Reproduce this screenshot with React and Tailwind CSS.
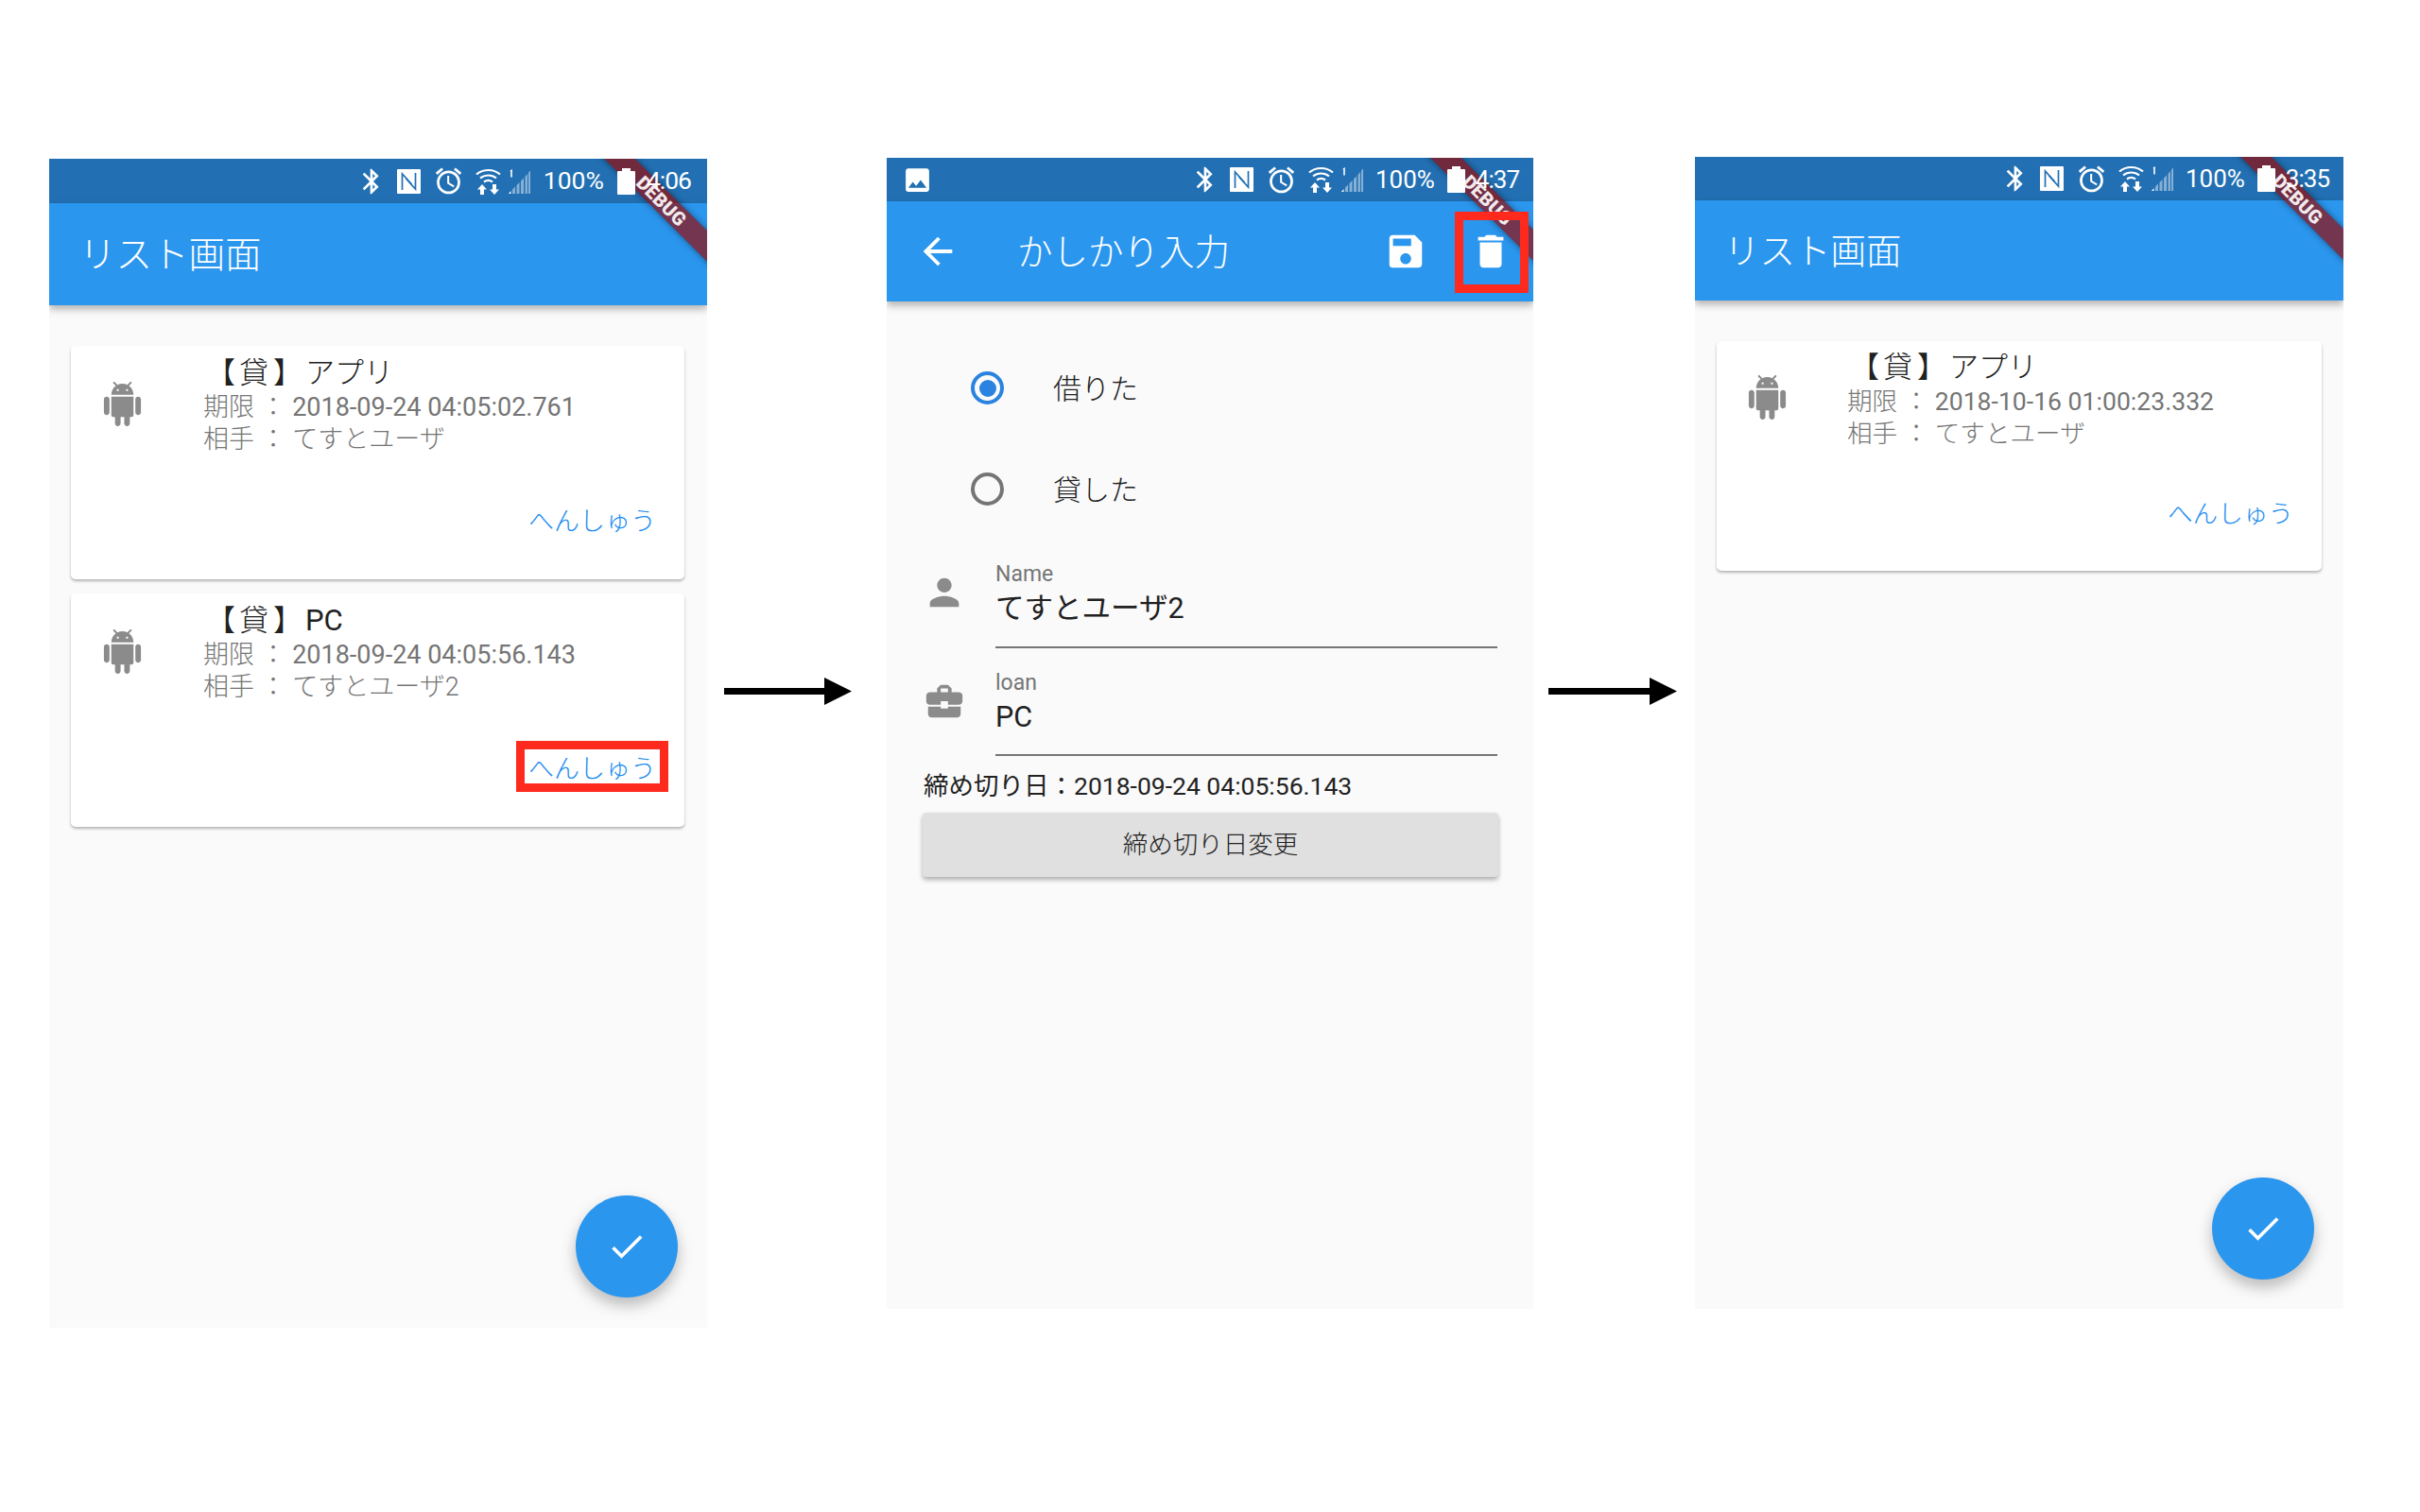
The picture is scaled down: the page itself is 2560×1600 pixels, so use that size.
import React from "react";
import { MdArrowBack, MdBluetooth, MdBusinessCenter, MdCheck, MdDelete, MdImage, MdOutlineAlarm, MdPerson, MdSave } from "react-icons/md";

function Android() {
  return (
    <svg width="47" height="47" viewBox="0 0 24 24" fill="#8b8b8b">
      <path d="M6 18c0 .55.45 1 1 1h1v3.500c0 .83.67 1.500 1.500 1.500s1.500-.67 1.500-1.500V19h2v3.500c0 .83.67 1.500 1.500 1.500s1.500-.67 1.500-1.500V19h1c.55 0 1-.45 1-1V8H6v10zM3.500 8C2.670 8 2 8.670 2 9.500v7c0 .83.67 1.500 1.500 1.500S5 17.330 5 16.500v-7C5 8.670 4.330 8 3.500 8zm17 0c-.83 0-1.500.67-1.500 1.500v7c0 .83.67 1.500 1.500 1.500s1.500-.67 1.500-1.500v-7c0-.83-.67-1.500-1.500-1.500zm-4.970-5.840l1.300-1.300c.2-.2.2-.51 0-.71-.2-.2-.51-.2-.71 0l-1.480 1.480C13.850 1.230 12.950 1 12 1c-.96 0-1.860.23-2.660.63L7.850.15c-.2-.2-.51-.2-.71 0-.2.2-.2.51 0 .71l1.310 1.310C6.970 3.260 6 5.010 6 7h12c0-1.990-.97-3.750-2.470-4.840zM10 5H9V4h1v1zm5 0h-1V4h1v1z" />
    </svg>
  );
}

function Nfc() {
  return (
    <svg width="25" height="26" viewBox="0 0 25 26">
      <rect width="25" height="26" rx="1" fill="#fff" />
      <path d="M5.500 22V5l10 11" fill="none" stroke="#2270b3" strokeWidth="1.700" />
      <path d="M19.500 4v17l-10-11" fill="none" stroke="#2270b3" strokeWidth="1.700" />
    </svg>
  );
}

function WifiArrows() {
  return (
    <svg width="27" height="28" viewBox="0 0 27 28" fill="none">
      <path d="M1 6.500C8 .5 19 .5 26 6.500" stroke="#fff" strokeWidth="2.200" />
      <path d="M5 10.500c5-4 12-4 17 0" stroke="#fff" strokeWidth="2.200" />
      <path d="M9 14.500c3-2.200 6-2.200 9 0" stroke="#fff" strokeWidth="2.200" />
      <path d="M7 17l-5 5.500h3V28h4v-5.500h3z" fill="#fff" />
      <path d="M20 28l5-5.500h-3V17h-4v5.500h-3z" fill="#fff" />
    </svg>
  );
}

function Signal() {
  return (
    <svg width="23" height="26" viewBox="0 0 23 26" fill="#fff">
      <path d="M1.500 1.500 3.800 0v8.500H2.200V2.500z" />
      <path d="M0 26h2.500v-3z" />
      <g opacity="0.45">
        <path d="M4 26h3v-7.500l-3 3z" />
        <path d="M8.500 26h3V14l-3 3z" />
        <path d="M13 26h3V9.500l-3 3z" />
        <path d="M17.500 26H20V5l-2.500 3z" />
        <path d="M21 26h2V1.500l-2 2z" />
      </g>
    </svg>
  );
}

function Battery() {
  return (
    <div className="flex flex-col items-center w-[19px]">
      <div className="w-[9px] h-[3px] bg-white" />
      <div className="w-[19px] h-[25px] bg-white rounded-[1px]" />
    </div>
  );
}

function StatusBar({ time, showImage, compact }) {
  const gap = compact
    ? ["ml-[10px]", "ml-[13px]", "ml-[12px]", "ml-[8px]", "ml-[13px]", "ml-[13px]", "ml-[11px]"]
    : ["ml-[11px]", "ml-[13px]", "ml-[12px]", "ml-[8px]", "ml-[14px]", "ml-[14px]", "ml-[12px]"];
  const textCls = compact ? "text-[26px]" : "text-[26.500px]";
  return (
    <div className={`flex items-center bg-[#2270b3] text-white ${compact ? "h-[46px] pr-[15px] pl-[16px]" : "h-[47px] pr-[17px] pl-[16px]"}`}>
      {showImage ? <div className="relative z-20"><MdImage size={33} /></div> : null}
      <div className="relative z-20 ml-auto flex items-center">
        <MdBluetooth size={32} />
        <div className={gap[0]}><Nfc /></div>
        <div className={gap[1]}><MdOutlineAlarm size={33} /></div>
        <div className={gap[2]}><WifiArrows /></div>
        <div className={gap[3]}><Signal /></div>
        <span className={`${gap[4]} ${textCls} font-normal leading-none`}>100%</span>
        <div className={gap[5]}><Battery /></div>
        <span className={`${gap[6]} ${textCls} tracking-[-1px] font-normal leading-none`}>{time}</span>
      </div>
    </div>
  );
}

function Ribbon() {
  return (
    <div className="absolute z-10 top-[33px] right-[-102px] w-[300px] h-[23px] rotate-45 bg-[rgba(147,11,11,0.7)] shadow-[0_0_7px_rgba(0,0,0,0.45)] flex items-center justify-center">
      <span className="text-[20px] leading-none font-black text-white/90 tracking-[0.2px]">DEBUG</span>
    </div>
  );
}

function Card({ title, latin, due, who, marked, small }) {
  const sub = small ? "text-[26.600px]" : "text-[27px]";
  return (
    <div className={`flex flex-col bg-white rounded-[5px] shadow-[0_2px_3px_rgba(0,0,0,0.28)] ${small ? "w-[640px] h-[243px]" : "w-[649px] h-[247px]"}`}>
      <div className="flex">
        <div className={small ? "ml-[30px] mt-[36px]" : "ml-[31px] mt-[38px]"}><Android /></div>
        <div className={`flex flex-col ${small ? "pt-[10px] ml-[61px]" : "pt-[11px] ml-[62px]"}`}>
          <div className="text-[31px] leading-[36px] text-[#212121] font-light ml-[3px]">
            <span className="tracking-[4px]">【</span><span className="tracking-[5px]">貸</span><span className="tracking-[3px]">】</span>{title}<span className="font-normal">{latin}</span>
          </div>
          <div className={`${sub} leading-[34px] text-[#757575] font-light mt-[1px]`}>期限 ： <span className="font-normal">{due}</span></div>
          <div className={`${sub} leading-[34px] text-[#757575] font-light`}>相手 ： {who}</div>
        </div>
      </div>
      <div className={`flex justify-end pr-[30px] ${small ? "mt-[50px]" : "mt-[52px]"}`}>
        <span className={`relative ${sub} leading-[36px] text-[#1a8cf0] font-light`}>
          へんしゅう
          {marked ? <span className="absolute left-[-13px] right-[-13px] top-[-12px] bottom-[-6px] border-[9px] border-[#ff2a1e]" /> : null}
        </span>
      </div>
    </div>
  );
}

function Fab({ pos }) {
  return (
    <div className={`absolute ${pos} w-[108px] h-[108px] rounded-full bg-[#2b96ee] text-white flex items-center justify-center shadow-[0_8px_16px_rgba(0,0,0,0.26)]`}>
      <MdCheck size={44} />
    </div>
  );
}

function Arrow({ cls }) {
  return (
    <div className={`${cls} flex items-center h-[29px] mt-[717px]`}>
      <div className="flex-1 h-[7px] bg-black" />
      <svg width="29" height="29" viewBox="0 0 29 29" className="shrink-0"><path d="M0 0 29 14.500 0 29z" fill="#000" /></svg>
    </div>
  );
}

function RadioRow({ on, label }) {
  return (
    <div className="flex items-center h-[107px] pl-[89px]">
      <div className={`w-[35px] h-[35px] rounded-full border-[4px] flex items-center justify-center ${on ? "border-[#2a83e0]" : "border-[#757575]"}`}>
        {on ? <div className="w-[18px] h-[18px] rounded-full bg-[#2a83e0]" /> : null}
      </div>
      <span className="ml-[52px] text-[30px] leading-[36px] mt-[2px] text-[#212121] font-light">{label}</span>
    </div>
  );
}

function Field({ icon, label, value, last }) {
  return (
    <div className="flex pl-[38px] pr-[38px]">
      <div className="w-[46px] mt-[33px] text-[#8b8b8b]">{icon}</div>
      <div className="flex-1 ml-[31px] flex flex-col pt-[23px]">
        <div className="text-[23px] leading-[28px] text-[#757575] font-normal">{label}</div>
        <div className="text-[30.500px] leading-[36px] text-[#212121] font-normal mt-[4px]">{value}</div>
        <div className={`h-[2px] bg-[#757575] ${last ? "mt-[21px]" : "mt-[22px]"}`} />
      </div>
    </div>
  );
}

export default function App() {
  return (
    <div className="flex items-start w-[2560px] h-[1600px] overflow-hidden bg-white pl-[52px] font-[Roboto,'Noto_Sans_CJK_JP',sans-serif]">
      <div className="relative shrink-0 w-[696px] h-[1237px] mt-[168px] overflow-hidden bg-[#fafafa]">
        <StatusBar time="4:06" />
        <div className="flex items-center h-[108px] pl-[32px] bg-[#2b96ee] shadow-[0_4px_8px_rgba(0,0,0,0.3)]">
          <span className="text-[38.500px] leading-none font-light text-white mt-[2px]">リスト画面</span>
        </div>
        <div className="flex flex-col gap-[15px] pt-[43px] pl-[23px]">
          <Card title="アプリ" due="2018-09-24 04:05:02.761" who="てすとユーザ" />
          <Card latin="PC" due="2018-09-24 04:05:56.143" who="てすとユーザ2" marked />
        </div>
        <Fab pos="right-[31px] bottom-[32px]" />
        <Ribbon />
      </div>

      <Arrow cls="ml-[18px] mr-[37px] w-[135px]" />

      <div className="relative shrink-0 w-[684px] h-[1218px] mt-[167px] overflow-hidden bg-[#fafafa]">
        <StatusBar time="4:37" showImage compact />
        <div className="relative flex items-center h-[106px] pl-[31px] pr-[22px] bg-[#2b96ee] shadow-[0_4px_8px_rgba(0,0,0,0.3)] text-white">
          <MdArrowBack size={46} />
          <span className="ml-[61px] flex-1 text-[37.500px] leading-none font-light mt-[3px]">かしかり入力</span>
          <MdSave size={46} />
          <MdDelete size={46} className="ml-[44px]" />
        </div>
        <div className="pt-[38px]">
          <RadioRow on label="借りた" />
          <RadioRow label="貸した" />
          <Field icon={<MdPerson size={46} />} label="Name" value="てすとユーザ2" />
          <Field icon={<MdBusinessCenter size={46} />} label="loan" value="PC" last />
          <div className="pl-[39px] mt-[14px] text-[26.500px] leading-[36px] text-[#222222] font-normal">締め切り日：2018-09-24 04:05:56.143</div>
          <div className="ml-[38px] mt-[10px] flex items-center justify-center w-[609px] h-[68px] rounded-[4px] bg-[#e0e0e0] shadow-[0_3px_5px_rgba(0,0,0,0.3)] text-[26.500px] text-[#222222] font-light">締め切り日変更</div>
        </div>
        <Ribbon />
        <div className="absolute z-30 left-[601px] top-[57px] w-[78px] h-[86px] border-[9px] border-[#ff2a1e]" />
      </div>

      <Arrow cls="ml-[16px] mr-[19px] w-[136px]" />

      <div className="relative shrink-0 w-[686px] h-[1219px] mt-[166px] overflow-hidden bg-[#fafafa]">
        <StatusBar time="3:35" compact />
        <div className="flex items-center h-[106px] pl-[31px] bg-[#2b96ee] shadow-[0_4px_8px_rgba(0,0,0,0.3)]">
          <span className="text-[37.500px] leading-none font-light text-white mt-[3px]">リスト画面</span>
        </div>
        <div className="pt-[43px] pl-[23px]">
          <Card small title="アプリ" due="2018-10-16 01:00:23.332" who="てすとユーザ" />
        </div>
        <Fab pos="right-[31px] bottom-[31px]" />
        <Ribbon />
      </div>
    </div>
  );
}
